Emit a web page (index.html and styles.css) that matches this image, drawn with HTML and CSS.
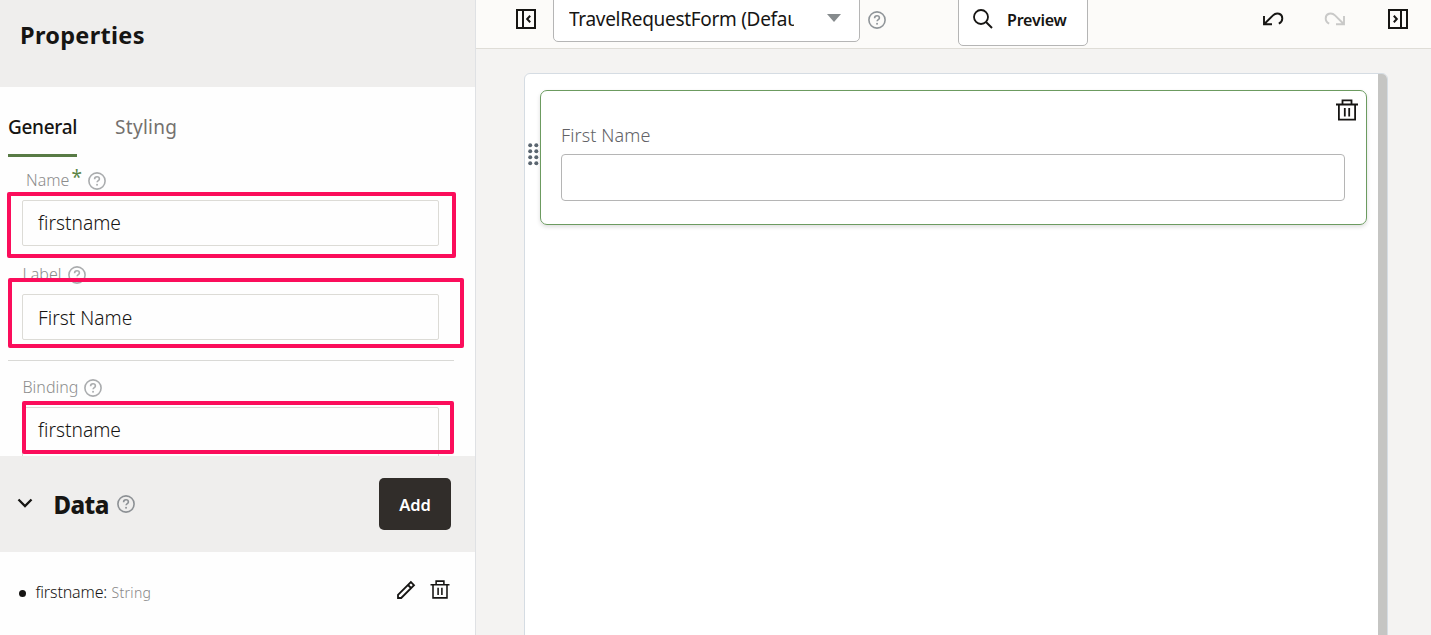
FILE: index.html
```html
<!DOCTYPE html>
<html lang="en">
<head>
<meta charset="utf-8">
<title>Form designer</title>
<link rel="stylesheet" href="styles.css">
</head>
<body>
<svg class="defs" aria-hidden="true">
  <symbol id="help" viewBox="0 0 18 18">
    <circle cx="9" cy="9" r="8.1" fill="none" stroke="currentColor" stroke-width="1.6"/>
    <path d="M6.6 7.2C6.6 5.7 7.6 4.8 9 4.8s2.4.9 2.4 2.1c0 1.6-2.3 1.7-2.3 3.4" fill="none" stroke="currentColor" stroke-width="1.6"/>
    <rect x="8.2" y="11.9" width="1.7" height="1.7" fill="currentColor"/>
  </symbol>
  <symbol id="trash" viewBox="0 0 22 22">
    <path d="M0 5.5H22M6.5 5V1.3H15.5V5M2.9 5.5V20.7H19.1V5.5M8.8 9V17.5M13.2 9V17.5" fill="none" stroke="currentColor" stroke-width="1.8"/>
  </symbol>
  <symbol id="panel" viewBox="0 0 20 20">
    <path d="M1 1H19V19H1ZM7 1V19M14.2 6.8L11.2 10L14.2 13.2" fill="none" stroke="currentColor" stroke-width="2"/>
  </symbol>
  <symbol id="undo" viewBox="0 0 21 14">
    <path d="M1 4V12.2H9M1.3 12L10 3.4C13.6-.2 19.4 1.6 19.3 6.6C19.3 9.2 17.8 10.8 15.8 11.7" fill="none" stroke="currentColor" stroke-width="1.9"/>
  </symbol>
</svg>
<div class="app">
  <aside class="side">
    <header class="side-head"><h1 class="title">Properties</h1></header>
    <nav class="tabs"><span class="tab active">General</span><span class="tab styling">Styling</span></nav>
    <section class="fields">
      <div class="label name-label"><span>Name</span><span class="star">*</span><svg class="help"><use href="#help"/></svg></div>
      <div class="input"><span>firstname</span></div>
      <div class="label label-label"><span>Label</span><svg class="help"><use href="#help"/></svg></div>
      <div class="input low"><span>First Name</span></div>
      <hr class="rule">
      <div class="label binding-label"><span>Binding</span><svg class="help"><use href="#help"/></svg></div>
      <div class="input cut"><span>firstname</span></div>
      <i class="mark mark-a"></i><i class="mark mark-b"></i><i class="mark mark-c"></i>
    </section>
    <header class="data-head">
      <svg class="chev" viewBox="0 0 16 10"><path d="M1.5 1.5L8 8L14.5 1.5" fill="none" stroke="#161513" stroke-width="2.3"/></svg>
      <h2 class="data-title">Data</h2>
      <svg class="help dark"><use href="#help"/></svg>
      <button class="add">Add</button>
    </header>
    <div class="item">
      <i class="bullet"></i><span class="item-name">firstname:</span><span class="item-type">String</span>
      <svg class="pencil" viewBox="0 0 18 18"><path d="M1 17V13.8L13.9 1.1L17 4.2L4.2 17ZM11 4L14 7" fill="none" stroke="#161513" stroke-width="1.8"/></svg>
      <svg class="trash-sm"><use href="#trash"/></svg>
    </div>
  </aside>
  <main class="main">
    <div class="toolbar">
      <svg class="panel-l"><use href="#panel"/></svg>
      <div class="select"><span class="clip">TravelRequestForm (Default)</span><i class="caret"></i></div>
      <svg class="help tool"><use href="#help"/></svg>
      <button class="preview"><svg class="search" viewBox="0 0 20 20"><circle cx="8" cy="8" r="7" fill="none" stroke="#161513" stroke-width="1.8"/><path d="M13 13L19 19" stroke="#161513" stroke-width="1.9"/></svg><span class="t-preview">Preview</span></button>
      <svg class="undo"><use href="#undo"/></svg>
      <svg class="redo"><use href="#undo"/></svg>
      <svg class="panel-r"><use href="#panel"/></svg>
    </div>
    <div class="canvas">
      <svg class="grip" viewBox="0 0 11 23"><g fill="#5b6670"><circle cx="2.2" cy="2.3" r="2"/><circle cx="8.3" cy="2.3" r="2"/><circle cx="2.2" cy="8.3" r="2"/><circle cx="8.3" cy="8.3" r="2"/><circle cx="2.2" cy="14.3" r="2"/><circle cx="8.3" cy="14.3" r="2"/><circle cx="2.2" cy="20.3" r="2"/><circle cx="8.3" cy="20.3" r="2"/></g></svg>
      <div class="card">
        <svg class="trash"><use href="#trash"/></svg>
        <div class="card-label">First Name</div>
        <div class="card-input"></div>
      </div>
      <div class="scroll"></div>
    </div>
  </main>
</div>
</body>
</html>
```
FILE: styles.css
```css
* { box-sizing: border-box; }
body { margin: 0; font-family: "Noto Sans", "Open Sans", sans-serif; color: #161513; overflow: hidden; }
h1, h2, hr { margin: 0; border: 0; }
button { font: inherit; padding: 0; }
svg { display: block; flex: none; overflow: visible; }
span { white-space: nowrap; }
.defs { position: absolute; width: 0; height: 0; }
.app { display: flex; width: 1431px; height: 635px; }

.side { width: 476px; flex: none; border-right: 1px solid #dfe1e4; background: #fefefe; }
.side-head { height: 87px; background: #efeeed; padding: 19px 0 0 20px; }
.title { font-size: 23.5px; line-height: 32px; font-weight: 700; letter-spacing: .3px; }
.tabs { display: flex; gap: 38px; height: 70px; padding: 25px 0 0 8px; }
.tab { font-size: 19px; line-height: 30px; font-weight: 500; letter-spacing: -.3px; color: #74716e; }
.tab.styling { font-weight: 450; letter-spacing: .3px; }
.tab.active { width: 69px; height: 45px; color: #161513; border-bottom: 3px solid #587b45; }
.fields { position: relative; height: 299px; overflow: hidden; }
.label { display: flex; color: #8c8c8c; font-size: 16px; line-height: 24px; font-weight: 300; padding-left: 22.5px; }
.help { width: 18px; height: 18px; color: #aaacae; }
.name-label { height: 43px; padding: 11px 0 0 26px; }
.star { color: #5c8547; font-size: 19px; font-weight: 400; line-height: 24px; margin: -3px 0 0 2px; width: 10px; }
.name-label .help { margin: 4px 0 0 7px; }
.label-label { height: 48px; padding-top: 16px; }
.label-label .help { margin: 4px 0 0 6.5px; }
.binding-label { height: 46px; padding-top: 14px; }
.binding-label .help { margin: 4px 0 0 6px; }
.input { width: 417px; height: 46px; margin-left: 22px; padding-left: 15px; border: 1px solid #dcdbd6; border-radius: 2px; font-size: 19.2px; line-height: 43px; font-weight: 300; }
.low { line-height: 45px; }
.cut { height: 60px; }
.rule { height: 1px; width: 446px; margin: 20px 0 0 8px; background: #d9d9d6; }
.mark { position: absolute; border: 4px solid #fb0d5b; border-radius: 2px; }
.mark-a { left: 7px; top: 35px; width: 449px; height: 66px; }
.mark-b { left: 8px; top: 121px; width: 456px; height: 70px; }
.mark-c { left: 22px; top: 244px; width: 432px; height: 53px; }
.data-head { display: flex; align-items: center; height: 96px; background: #efeeed; padding: 0 24px 0 17px; }
.chev { width: 16px; height: 10px; margin: 0 20.5px 2px 0; }
.data-title { font-size: 24px; line-height: 34px; font-weight: 800; letter-spacing: -.6px; width: 55px; margin-top: 2px; }
.dark { color: #8d9195; margin-left: 8px; }
.add { margin-left: auto; width: 72px; height: 52px; border: 0; border-radius: 5px; background: #312d2a; color: #fff; font-size: 16.5px; font-weight: 600; }
.item { display: flex; align-items: center; height: 77px; padding: 2px 25px 0 19px; }
.bullet { width: 7px; height: 7px; border-radius: 50%; background: #161513; margin: 3px 9.5px 0 0; }
.item-name { font-size: 16px; font-weight: 300; width: 76px; letter-spacing: -.15px; }
.item-type { font-size: 14px; font-weight: 300; color: #888; margin-top: 2px; letter-spacing: .3px; }
.pencil { width: 18px; height: 18px; margin: 0 15px 4px auto; }
.trash-sm { width: 20px; height: 19px; margin-bottom: 4px; }

.main { width: 955px; background: #f4f3f2; }
.toolbar { display: flex; height: 49px; background: #fcfbf9; border-bottom: 1px solid #dfddd7; padding-left: 40px; }
.panel-l, .panel-r { width: 20px; height: 20px; margin-top: 9px; }
.panel-r { transform: scaleX(-1); margin-left: 43px; }
.select { display: flex; width: 307px; height: 50px; margin: -8px 0 0 17px; padding: 8px 18px 0 15px; border: 1px solid #b5b5b5; border-radius: 5px; background: #fff; }
.clip { width: 225px; overflow: hidden; font-size: 19px; letter-spacing: -.3px; line-height: 37px; }
.caret { margin: 13px 0 0 auto; width: 14px; height: 8px; background: #868b8d; clip-path: polygon(0 0, 100% 0, 50% 100%); }
.tool { color: #909599; margin: 11px 0 0 8px; }
.preview { display: flex; width: 130px; height: 56px; margin: -10px 0 0 72px; padding: 17px 0 0 14px; border: 1px solid #b5b5b5; border-radius: 5px; background: #fff; color: #161513; }
.search { width: 20px; height: 20px; margin-top: 1px; }
.t-preview { font-size: 16px; font-weight: 600; line-height: 24px; margin-left: 14px; letter-spacing: -.2px; }
.undo { width: 21px; height: 14px; margin: 12px 0 0 175px; }
.redo { width: 21px; height: 14px; margin: 12px 0 0 40px; transform: scaleX(-1); color: #c9c9c8; }
.canvas { display: flex; width: 864px; height: 580px; margin: 24px 0 0 48px; border: 1px solid #d5dce3; border-radius: 6px; background: #fff; overflow: hidden; }
.grip { width: 11px; height: 23px; margin: 69px 1px 0 3px; }
.card { position: relative; width: 827px; height: 135px; margin-top: 16px; padding: 32px 20px; border: 1px solid #6c9b60; border-radius: 7px; box-shadow: 0 2px 4px #0002; }
.trash { position: absolute; right: 8px; top: 8px; width: 22px; height: 22px; }
.card-label { font-size: 18px; line-height: 25px; font-weight: 300; letter-spacing: .1px; color: #626266; }
.card-input { height: 47px; margin-top: 6px; border: 1px solid #b5b5b5; border-radius: 4px; width: 784px; }
.scroll { margin-left: auto; width: 9px; background: #c5c5c3; }
```
